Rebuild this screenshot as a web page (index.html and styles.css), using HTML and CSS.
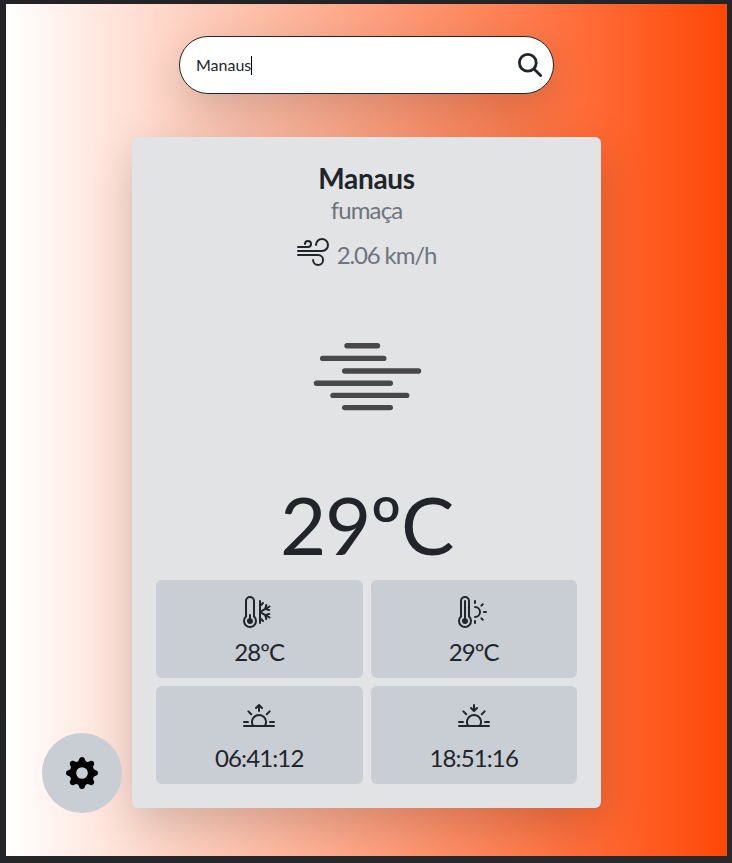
FILE: index.html
```html
<!DOCTYPE html>
<html lang="pt-BR">
<head>
<meta charset="utf-8">
<title>Clima</title>
<link rel="stylesheet" href="styles.css">
</head>
<body>
<main class="page">
  <form class="search">
    <span class="search-text">Manaus</span><span class="caret"></span>
    <svg class="search-icon" viewBox="0 0 24 24"><circle cx="9.8" cy="9.8" r="8.400"/><path d="M16 16l6.600 6.600"/></svg>
  </form>
  <section class="card">
    <h1 class="city">Manaus</h1>
    <p class="condition">fumaça</p>
    <div class="wind">
      <svg class="icon" viewBox="0 0 16 16"><path d="M12.500 2A2.500 2.500 0 0 0 10 4.500a.5.5 0 0 1-1 0A3.500 3.500 0 1 1 12.500 8H.5a.5.5 0 0 1 0-1h12a2.500 2.500 0 0 0 0-5zm-7 1a1 1 0 0 0-1 1 .5.5 0 0 1-1 0 2 2 0 1 1 2 2h-5a.5.5 0 0 1 0-1h5a1 1 0 0 0 0-2zM0 9.500A.5.5 0 0 1 .5 9h10.042a3 3 0 1 1-3 3 .5.5 0 0 1 1 0 2 2 0 1 0 2-2H.5a.5.5 0 0 1-.5-.5z"/></svg>
      <span class="speed">2.06 km/h</span>
    </div>
    <svg class="weather" viewBox="0 0 140 90">
      <path d="M47 15.800H77.500M22.700 28.400H83.800M44.700 41H118.500M16.500 53.200H90.300M33 65.400H106.700M44.700 77.600H90.300"/>
    </svg>
    <p class="temperature">29ºC</p>
    <div class="details">
      <div class="tile">
        <svg class="icon" viewBox="0 0 16 16"><path d="M5 12.500a1.500 1.500 0 1 1-2-1.415V9.500a.5.5 0 0 1 1 0v1.585A1.500 1.500 0 0 1 5 12.500z"/><path d="M1 2.500a2.500 2.500 0 0 1 5 0v7.550a3.500 3.500 0 1 1-5 0V2.500zM3.500 1A1.500 1.500 0 0 0 2 2.500v7.987l-.167.15a2.500 2.500 0 1 0 3.333 0L5 10.486V2.500A1.500 1.500 0 0 0 3.500 1zm5 1a.5.5 0 0 1 .5.5v1.293l.646-.647a.5.5 0 0 1 .708.708L9 5.207v1.927l1.669-.963.495-1.850a.5.5 0 1 1 .966.26l-.237.882 1.120-.646a.5.5 0 0 1 .5.866l-1.120.646.884.237a.5.5 0 1 1-.26.966l-1.848-.495L9.500 8l1.669.963 1.849-.495a.5.5 0 1 1 .258.966l-.883.237 1.120.646a.5.5 0 0 1-.5.866l-1.120-.646.237.883a.5.5 0 1 1-.966.258L10.670 9.830 9 8.866v1.927l1.354 1.353a.5.5 0 0 1-.708.708L9 12.207V13.500a.5.5 0 0 1-1 0v-11a.5.5 0 0 1 .5-.5z"/></svg>
        <span>28ºC</span>
      </div>
      <div class="tile">
        <svg class="icon" viewBox="0 0 16 16"><path d="M5 12.500a1.500 1.500 0 1 1-2-1.415V2.500a.5.5 0 0 1 1 0v8.585A1.500 1.500 0 0 1 5 12.500z"/><path d="M1 2.500a2.500 2.500 0 0 1 5 0v7.550a3.500 3.500 0 1 1-5 0V2.500zM3.500 1A1.500 1.500 0 0 0 2 2.500v7.987l-.167.15a2.500 2.500 0 1 0 3.333 0L5 10.486V2.500A1.500 1.500 0 0 0 3.500 1zm5 1a.5.5 0 0 1 .5.5v1a.5.5 0 0 1-1 0v-1a.5.5 0 0 1 .5-.5zm4.243 1.757a.5.5 0 0 1 0 .707l-.707.708a.5.5 0 1 1-.708-.708l.708-.707a.5.5 0 0 1 .707 0zM8 5.500a.5.5 0 0 1 .5-.5 3 3 0 1 1 0 6 .5.5 0 0 1 0-1 2 2 0 0 0 0-4 .5.5 0 0 1-.5-.5zM12.500 8a.5.5 0 0 1 .5-.5h1a.5.5 0 1 1 0 1h-1a.5.5 0 0 1-.5-.5zm-1.172 2.828a.5.5 0 0 1 .708 0l.707.708a.5.5 0 0 1-.707.707l-.708-.707a.5.5 0 0 1 0-.708zM8.500 12a.5.5 0 0 1 .5.5v1a.5.5 0 0 1-1 0v-1a.5.5 0 0 1 .5-.5z"/></svg>
        <span>29ºC</span>
      </div>
      <div class="tile">
        <svg class="icon" viewBox="0 0 16 16"><path d="M7.646 1.146a.5.5 0 0 1 .708 0l1.500 1.500a.5.5 0 0 1-.708.708L8.500 2.707V4.500a.5.5 0 0 1-1 0V2.707l-.646.647a.5.5 0 1 1-.708-.708l1.500-1.500zM2.343 4.343a.5.5 0 0 1 .707 0l1.414 1.414a.5.5 0 0 1-.707.707L2.343 5.050a.5.5 0 0 1 0-.707zm11.314 0a.5.5 0 0 1 0 .707l-1.414 1.414a.5.5 0 1 1-.707-.707l1.414-1.414a.5.5 0 0 1 .707 0zM8 7a3 3 0 0 1 2.599 4.500H5.400A3 3 0 0 1 8 7zm3.710 4.500a4 4 0 1 0-7.418 0H.499a.5.5 0 0 0 0 1h15a.5.5 0 0 0 0-1h-3.790zM0 10a.5.5 0 0 1 .5-.5h2a.5.5 0 0 1 0 1h-2A.5.5 0 0 1 0 10zm13 0a.5.5 0 0 1 .5-.5h2a.5.5 0 0 1 0 1h-2a.5.5 0 0 1-.5-.5z"/></svg>
        <span>06:41:12</span>
      </div>
      <div class="tile">
        <svg class="icon" viewBox="0 0 16 16"><path d="M7.646 4.854a.5.5 0 0 0 .708 0l1.500-1.500a.5.5 0 0 0-.708-.708l-.646.647V1.500a.5.5 0 0 0-1 0v1.793l-.646-.647a.5.5 0 1 0-.708.708l1.500 1.500zM2.343 4.343a.5.5 0 0 1 .707 0l1.414 1.414a.5.5 0 0 1-.707.707L2.343 5.050a.5.5 0 0 1 0-.707zm11.314 0a.5.5 0 0 1 0 .707l-1.414 1.414a.5.5 0 1 1-.707-.707l1.414-1.414a.5.5 0 0 1 .707 0zM8 7a3 3 0 0 1 2.599 4.500H5.400A3 3 0 0 1 8 7zm3.710 4.500a4 4 0 1 0-7.418 0H.499a.5.5 0 0 0 0 1h15a.5.5 0 0 0 0-1h-3.790zM0 10a.5.5 0 0 1 .5-.5h2a.5.5 0 0 1 0 1h-2A.5.5 0 0 1 0 10zm13 0a.5.5 0 0 1 .5-.5h2a.5.5 0 0 1 0 1h-2a.5.5 0 0 1-.5-.5z"/></svg>
        <span>18:51:16</span>
      </div>
    </div>
  </section>
  <button class="settings" type="button">
    <svg viewBox="0 0 16 16"><path d="M9.405 1.050c-.413-1.400-2.397-1.400-2.810 0l-.1.34a1.464 1.464 0 0 1-2.105.872l-.31-.17c-1.283-.698-2.686.705-1.987 1.987l.169.311c.446.82.023 1.841-.872 2.105l-.34.1c-1.400.413-1.400 2.397 0 2.810l.34.1a1.464 1.464 0 0 1 .872 2.105l-.17.31c-.698 1.283.705 2.686 1.987 1.987l.311-.169a1.464 1.464 0 0 1 2.105.872l.1.34c.413 1.400 2.397 1.400 2.810 0l.1-.34a1.464 1.464 0 0 1 2.105-.872l.31.17c1.283.698 2.686-.705 1.987-1.987l-.169-.311a1.464 1.464 0 0 1 .872-2.105l.34-.1c1.400-.413 1.400-2.397 0-2.810l-.34-.1a1.464 1.464 0 0 1-.872-2.105l.17-.31c.698-1.283-.705-2.686-1.987-1.987l-.311.169a1.464 1.464 0 0 1-2.105-.872l-.1-.34zM8 10.930a2.929 2.929 0 1 1 0-5.860 2.929 2.929 0 0 1 0 5.858z"/></svg>
  </button>
</main>
</body>
</html>
```

FILE: styles.css
```css
* {
  box-sizing: border-box;
}

body {
  margin: 0;
  height: 863px;
  padding: 4px 5px 7px 6px;
  overflow: hidden;
  background: linear-gradient(135deg, #232224, #27292c);
  color: #212529;
  font-family: Lato, sans-serif;
}

.page {
  position: relative;
  height: 852px;
  padding-top: 32px;
  overflow: hidden;
  background: linear-gradient(90deg, #fff, #ff4807);
}

.search {
  display: flex;
  align-items: center;
  width: 375px;
  height: 58px;
  margin: 0 auto;
  padding: 0 11px 0 16px;
  border: 1px solid #212529;
  border-radius: 29px;
  background: #fff;
  box-shadow: 0 16px 48px rgba(0, 0, 0, 0.175);
}

.search-text {
  padding-bottom: 2px;
  font-size: 16px;
}

.caret {
  width: 1px;
  height: 19px;
  background: #000;
}

.search-icon {
  width: 24px;
  height: 24px;
  margin-left: auto;
  fill: none;
  stroke: #212529;
  stroke-width: 2.8;
  stroke-linecap: round;
}

.card {
  display: flex;
  flex-direction: column;
  align-items: center;
  width: 469px;
  height: 671px;
  margin: 43px auto 0;
  padding: 24px;
  border-radius: 6px;
  background: #e2e3e5;
  box-shadow: 0 16px 48px rgba(0, 0, 0, 0.175);
}

.city,
.condition,
.temperature {
  margin: 0;
}

.city {
  font-size: 28px;
  line-height: 34px;
  font-weight: 700;
  letter-spacing: -0.3px;
}

.condition {
  font-size: 24px;
  line-height: 30px;
  letter-spacing: -0.9px;
  color: #6c757d;
}

.wind {
  display: flex;
  gap: 8px;
  height: 42px;
  margin-top: 11px;
}

.icon {
  display: block;
  width: 32px;
  height: 32px;
  fill: #212529;
}

.speed {
  font-size: 24px;
  line-height: 38px;
  letter-spacing: -1.15px;
  color: #6c757d;
}

.weather {
  width: 140px;
  height: 90px;
  margin-top: 52px;
  margin-left: 6px;
  fill: none;
  stroke: #48484a;
  stroke-width: 5.4;
  stroke-linecap: round;
}

.temperature {
  margin-top: 56px;
  font-size: 80px;
  line-height: 96px;
  letter-spacing: -1.3px;
}

.details {
  display: grid;
  grid-template-columns: 1fr 1fr;
  gap: 8px;
  width: 100%;
  margin-top: auto;
}

.tile {
  display: flex;
  flex-direction: column;
  align-items: center;
  height: 98px;
  padding-top: 16px;
  border-radius: 6px;
  background: #c9cdd4;
  font-size: 24px;
  line-height: 36px;
  letter-spacing: -0.9px;
}

.tile span {
  margin-top: 6px;
}

.settings {
  position: absolute;
  left: 36px;
  bottom: 43px;
  display: grid;
  place-items: center;
  width: 80px;
  height: 80px;
  padding: 0;
  border: 0;
  border-radius: 50%;
  background: #c9cdd4;
}

.settings svg {
  width: 32px;
  height: 32px;
}
```
